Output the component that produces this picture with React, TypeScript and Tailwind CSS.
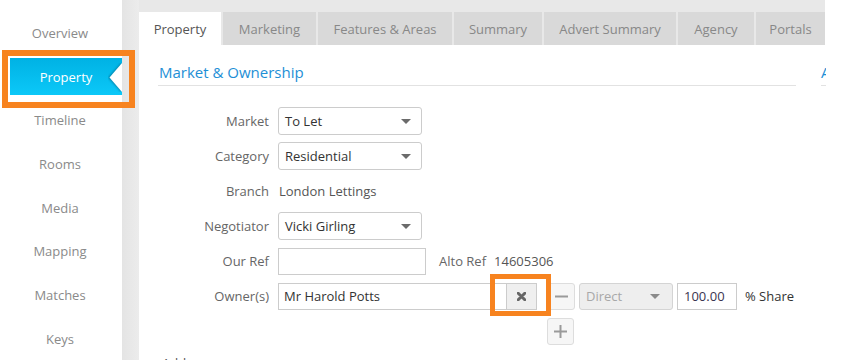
import React from 'react';

const sideItems = ['Overview', 'Property', 'Timeline', 'Rooms', 'Media', 'Mapping', 'Matches', 'Keys'];

// tab widths measured off the reference
const tabs = [
  { name: 'Property', w: 'w-[82px]' },
  { name: 'Marketing', w: 'w-[93px]' },
  { name: 'Features & Areas', w: 'w-[134px]' },
  { name: 'Summary', w: 'w-[88px]' },
  { name: 'Advert Summary', w: 'w-[132px]' },
  { name: 'Agency', w: 'w-[76px]' },
  { name: 'Portals', w: 'w-[69px]' },
];

function Caret({ color = '#6b6b6b' }: { color?: string }) {
  return (
    <svg width="10" height="5" viewBox="0 0 10 5" aria-hidden="true">
      <polygon points="0,0 10,0 5,5" fill={color} />
    </svg>
  );
}

function Select({ value, width = 'w-[144px]' }: { value: string; width?: string }) {
  return (
    <div className={`${width} h-[28px] flex items-center justify-between rounded-[3px] border border-[#cccccc] bg-white pl-[6px] pr-[10px] text-[#333]`}>
      <span>{value}</span>
      <Caret />
    </div>
  );
}

function Row({ label, children }: { label: string; children?: React.ReactNode }) {
  return (
    <div className="flex h-[28px] items-center">
      <div className="w-[120px] pr-[9px] text-right text-[#666]">{label}</div>
      {children}
    </div>
  );
}

function SmallBtn({ kind }: { kind: 'minus' | 'plus' }) {
  return (
    <div className="flex h-[27px] w-[27px] items-center justify-center rounded-[3px] border border-[#dddddd] bg-[#f6f6f6]">
      <svg width="13" height="13" viewBox="0 0 13 13" aria-hidden="true">
        <rect x="0" y="5.5" width="13" height="2" fill="#9a9a9a" />
        {kind === 'plus' && <rect x="5.5" y="0" width="2" height="13" fill="#9a9a9a" />}
      </svg>
    </div>
  );
}

export default function App() {
  return (
    <div
      className="relative flex h-[360px] w-[856px] overflow-hidden bg-white text-[13px] leading-[18px]"
      style={{ fontFamily: '"Open Sans", "Noto Sans", sans-serif' }}
    >
      {/* side menu */}
      <nav className="w-[122px] shrink-0 bg-white pt-[11px]">
        {sideItems.map((item) =>
          item === 'Property' ? (
            <div key={item} className="flex h-[43.7px] items-center">
              <div className="relative ml-[10px] flex h-[37px] w-[116px] items-center justify-center bg-gradient-to-b from-[#00b2e4] to-[#0cc8f8] text-white">
                <span>{item}</span>
                <svg className="absolute right-0 top-[5px]" width="14" height="29" viewBox="0 0 14 29" aria-hidden="true">
                  <defs>
                    <filter id="nb" x="-50%" y="-50%" width="200%" height="200%">
                      <feGaussianBlur stdDeviation="1" />
                    </filter>
                  </defs>
                  <polygon points="14,-1 0,14.5 14,30" fill="#005f80" opacity="0.6" filter="url(#nb)" />
                  <polygon points="14,0 1.5,14.5 14,29" fill="#ffffff" />
                </svg>
              </div>
            </div>
          ) : (
            <div key={item} className="flex h-[43.7px] items-center justify-center pr-[2px] text-[#8a8a8a]">
              {item}
            </div>
          )
        )}
      </nav>

      {/* gutter */}
      <div className="w-[17px] shrink-0 bg-gradient-to-r from-[#e4e4e4] to-[#ececec]" />

      {/* main, clipped where the reference stops */}
      <div className="flex w-[687px] shrink-0 flex-col overflow-hidden">
        <div className="flex h-[45px] w-[686px] shrink-0 gap-[2px] bg-[#e8e8e8] pt-[12px]">
          {tabs.map((t, i) => (
            <div
              key={t.name}
              className={`${t.w} flex h-[33px] shrink-0 items-center justify-center ${
                i === 0 ? 'bg-white text-[#555]' : 'bg-[#d9d9d9] text-[#888]'
              }`}
            >
              {t.name}
            </div>
          ))}
        </div>

        <div className="flex">
          {/* left column */}
          <div className="w-[677px] shrink-0 pl-[19px] pr-[20px]">
            <div className="mt-[17px] border-b border-[#e2e2e2] pb-[3px] pl-[1px] text-[15px] leading-[20px] text-[#1e8fd6]">
              Market &amp; Ownership
            </div>

            <div className="mt-[21px] flex flex-col gap-[7px]">
              <Row label="Market">
                <Select value="To Let" />
              </Row>
              <Row label="Category">
                <Select value="Residential" />
              </Row>
              <Row label="Branch">
                <span className="pl-[1px] text-[#555]">London Lettings</span>
              </Row>
              <Row label="Negotiator">
                <Select value="Vicki Girling" />
              </Row>
              <Row label="Our Ref">
                <div className="h-[27px] w-[148px] border border-[#cccccc] bg-white" />
                <span className="ml-[13px] text-[#666]">Alto Ref</span>
                <span className="ml-[8px] text-[#555]">14605306</span>
              </Row>
              <Row label="Owner(s)">
                <div className="flex h-[27px] w-[259px] border border-[#cccccc] bg-white">
                  <span className="flex flex-1 items-center pl-[5px] text-[#333]">Mr Harold Potts</span>
                  <div className="flex w-[30px] items-center justify-center border-l border-[#cccccc] bg-[#efefef]">
                    <svg width="9" height="9" viewBox="0 0 9 9" aria-hidden="true">
                      <path d="M1.2 1.2 L7.8 7.8 M7.8 1.2 L1.2 7.8" stroke="#666666" strokeWidth="3" strokeLinecap="round" />
                    </svg>
                  </div>
                </div>
                <div className="ml-[11px]">
                  <SmallBtn kind="minus" />
                </div>
                <div className="ml-[4px] flex h-[27px] w-[94px] items-center justify-between rounded-[3px] border border-[#d4d4d4] bg-[#eeeeee] pl-[6px] pr-[12px] text-[#a8a8a8]">
                  <span>Direct</span>
                  <Caret color="#8a8a8a" />
                </div>
                <div className="ml-[4px] flex h-[27px] w-[60px] items-center border border-[#cccccc] bg-white pl-[6px] text-[#3a3450]">
                  100.00
                </div>
                <span className="ml-[8px] text-[#333]">% Share</span>
              </Row>
              <div className="flex h-[28px] items-center pl-[389px]">
                <SmallBtn kind="plus" />
              </div>
            </div>

            <div className="mt-[9px] pl-[4px] text-[13px] text-[#555]">Address</div>
          </div>

          {/* right column, mostly cut off */}
          <div className="ml-[5px] w-[300px] shrink-0">
            <div className="mt-[17px] border-b border-[#e2e2e2] pb-[3px] text-[15px] leading-[20px] text-[#1e8fd6]">
              Additional
            </div>
          </div>
        </div>
      </div>

      <div className="flex-1 bg-white" />

      {/* orange annotation boxes */}
      <div className="pointer-events-none absolute left-[2px] top-[50px] h-[58px] w-[133px] border-[6px] border-[#f7831f]" />
      <div className="pointer-events-none absolute left-[490px] top-[274px] h-[42px] w-[61px] border-[5px] border-[#f7831f]" />
    </div>
  );
}
